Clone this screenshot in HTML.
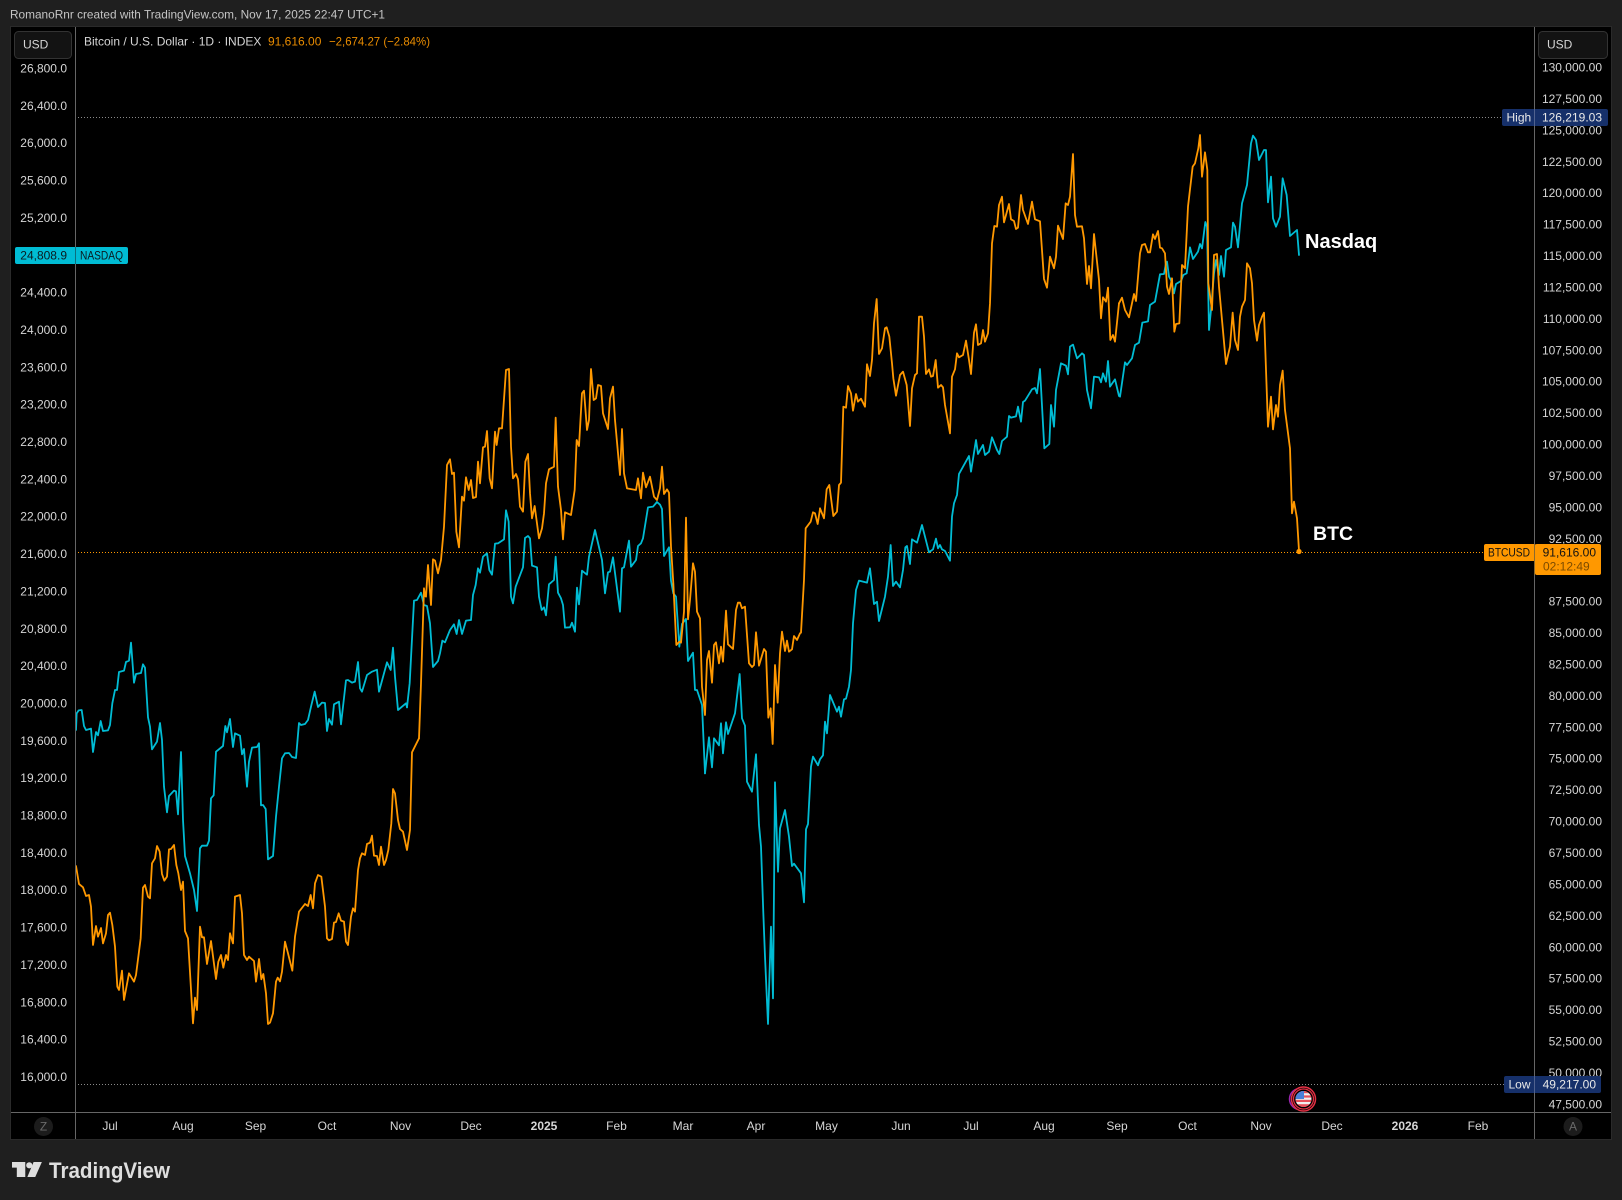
<!DOCTYPE html>
<html lang="en">
<head>
<meta charset="utf-8">
<title>Bitcoin / U.S. Dollar chart</title>
<style>
html,body{margin:0;padding:0;background:#1f1f1f;width:1622px;height:1200px;overflow:hidden}
svg{display:block}
text{font-family:"Liberation Sans",sans-serif;font-size:12px;fill:#d6d6d6}
.ly text{text-anchor:end}
.ry text{text-anchor:end}
.tm text{text-anchor:middle}
.c{fill:none;stroke:#00bcd4;stroke-width:5.4;stroke-linejoin:round;stroke-linecap:round}
.o{fill:none;stroke:#ff9800;stroke-width:5.4;stroke-linejoin:round;stroke-linecap:round}
</style>
</head>
<body>
<svg width="1622" height="1200" viewBox="0 0 1622 1200" xmlns="http://www.w3.org/2000/svg">
<text x="10" y="18.5" style="fill:#c4c4c4" textLength="375" lengthAdjust="spacingAndGlyphs">RomanoRnr created with TradingView.com, Nov 17, 2025 22:47 UTC+1</text>
<rect x="10.5" y="26.5" width="1601" height="1113" fill="#000" stroke="#2a2a2a"/>

<!-- dotted lines -->
<line x1="75" y1="117.5" x2="1502" y2="117.5" stroke="#8a8a8a" stroke-dasharray="1 2"/>
<line x1="75" y1="1084.5" x2="1504" y2="1084.5" stroke="#8a8a8a" stroke-dasharray="1 2"/>
<line x1="75" y1="552.5" x2="1484" y2="552.5" stroke="#ff9800" stroke-dasharray="1 2"/>

<!-- cyan -->
<g transform="translate(70,620) scale(.33333)"><polyline class="c" points="18,330 20,280 26,271 35,270 42,318 48,330 63,326 69,396 78,336 84,346 92,303 99,333 114,331 120,315 127,250 135,210 141,210 147,156 162,152 168,126 177,122 183,68 192,188 198,162 213,159 219,133 225,143 234,292 240,320 246,388 261,365 270,309 276,360 282,500 291,577 297,528 312,512 318,514 324,583 333,396 339,600 345,708 360,760 372,810 381,873 390,685 396,677 411,677 417,662 423,535 431,526 438,395 459,378 466,318 471,337 480,297 489,381 495,340 510,347 516,403 522,387 531,500 537,425 546,383 561,381 567,370 573,556 579,555 587,567 594,718 609,708 618,590 627,500 636,415 645,400 657,399 666,411 678,414 687,309 693,315 705,312 714,300 723,260 734,215 744,261 756,248 765,249 771,333 777,297 786,314 792,253 807,245 813,313 828,181 834,180 846,188 855,185 864,126 870,205 876,215 891,165 906,155 921,149 927,215 951,127 962,150 969,83 975,170 984,270 1008,250 1011,262"/></g>
<g transform="translate(400,350) scale(.33333)"><polyline class="c" points="21,1072 29,1000 42,752 51,750 63,728 72,765 81,768 90,820 99,951 114,933 120,910 127,872 135,877 150,840 162,823 170,852 177,810 186,852 198,812 213,810 219,735 227,705 234,655 240,668 249,620 261,610 268,660 276,674 285,581 294,580 312,568 318,481 326,515 333,740 339,760 347,710 369,652 375,564 384,558 390,565 396,647 411,652 417,740 425,780 432,772 438,796 447,703 462,690 467,620 474,728 483,745 489,765 495,833 510,832 516,818 525,845 531,713 537,763 546,662 561,674 567,620 585,540 606,630 615,730 624,667 630,665 639,622 660,785 666,655 672,652 687,572 693,650 708,630 714,588 723,580 729,565 744,472 759,470 771,456 780,464 786,477 792,618 807,592 813,692 820,730 828,740 838,890 846,822 858,807 864,933 879,908 885,1020 891,1020 906,1065 915,1270"/></g>
<g transform="translate(650,550) scale(.33333)"><polyline class="c" points="165,670 177,562 186,652 192,565 207,586 213,520 219,610 228,517 234,552 255,490 269,372 276,505 285,527 291,695 306,725 318,613 327,825 333,890 340,1090 345,1220 354,1422 363,1130 369,1345 375,697 384,965 390,835 405,780 417,860 426,948 432,941 453,970 462,1057 468,838 474,822 483,650 489,620 504,646 510,628 519,616 525,515 531,550 540,435 561,485 567,470 573,500 582,448 588,446 597,410 603,360 609,220 618,120 627,92 651,98 660,55 672,162 681,155 687,213 705,140 714,80 722,-15 729,108 738,95 750,112 759,60 766,-8 771,-12 780,42"/></g>
<g transform="translate(820,140) scale(.33333)"><polyline class="c" points="270,1270 276,1198 291,1208 306,1155 315,1190 327,1237 339,1228 348,1196 354,1225 360,1215 366,1228 375,1233 390,1262 396,1130 402,1090 411,1065 417,1002 447,948 453,995 468,900 474,942 489,915 495,945 507,935 516,892 531,930 538,942 546,903 561,890 567,828 573,833 588,829 594,800 603,845 609,786 615,782 636,748 645,744 651,760 660,687 673,925 688,912 693,795 702,860 708,750 723,670 738,677 744,703 750,620 759,614 771,655 786,640 792,645 801,750 813,805 822,710 837,712 843,727 849,700 858,725 864,663 870,740 885,718 897,768"/></g>
<g transform="translate(1080,120) scale(.33333)"><polyline class="c" points="120,830 135,727 141,735 156,715 165,675 177,668 187,608 204,604 210,555 225,545 240,463 252,462 258,430 261,425 267,470 273,480 282,520 288,492 303,483 310,465 320,460 330,382 339,417 354,395 360,372 366,385 376,306 381,320 387,630 393,570 402,460 408,420 417,465 423,408 432,470 438,390 453,382 459,308 465,320 474,382 486,250 501,195 513,70 519,47 528,60 537,120 552,90 558,90 564,247 573,170 579,295 588,320 600,290 608,175 620,225 630,348 651,330 657,405"/></g>

<!-- orange -->
<g transform="translate(70,620) scale(.33333)"><polyline class="o" points="18,738 27,792 39,802 48,828 57,825 63,860 69,975 78,918 84,950 93,924 99,970 108,940 114,885 120,878 127,915 135,980 142,1100 147,1110 156,1052 162,1140 177,1060 192,1085 198,1065 212,955 219,803 225,795 234,830 240,835 246,730 255,715 261,678 269,695 276,762 283,782 291,770 297,688 303,687 312,675 319,735 325,760 333,810 339,785 345,933 354,955 369,1210 375,1133 381,1170 390,920 396,952 402,952 411,1032 423,963 438,1077 445,1025 453,1005 460,1043 468,1005 474,1020 480,940 489,970 495,830 510,825 516,880 522,1005 531,1020 537,1010 552,1023 558,1085 567,1017 574,1078 580,1062 588,1120 594,1212 600,1208 609,1180 618,1085 623,1073 630,1084 636,1055 645,965 654,1000 667,1052 675,950 687,875 705,852 714,858 722,825 729,865 735,790 744,765 754,770 765,860 771,955 777,961 786,957 792,908 798,906 806,880 813,902 822,905 828,965 834,975 843,890 849,865 855,875 864,750 870,715 876,700 885,705 891,672 900,668 906,647 912,707 921,708 927,735 933,680 942,735 948,720 955,690 964,610 969,507 975,520 984,600 990,627 999,635 1011,690 1020,630 1026,397 1038,373 1047,355"/></g>
<g transform="translate(400,350) scale(.33333)"><polyline class="o" points="57,1165 63,1000 72,715 75,738 78,740 84,645 93,765 99,628 105,632 114,670 123,630 132,530 141,345 150,328 156,372 162,368 169,545 177,592 186,440 192,452 198,382 206,420 213,390 219,444 228,441 234,335 240,400 249,292 255,290 261,243 269,385 276,415 285,245 290,285 297,235 306,235 318,60 327,57 333,290 339,385 348,372 354,388 360,470 369,485 376,335 384,312 390,430 396,505 404,468 417,565 426,535 432,490 438,400 447,358 462,350 467,203 474,410 483,480 489,568 495,487 513,495 524,420 530,270 537,288 546,130 552,122 561,240 567,210 573,57 581,150 588,145 594,105 603,108 609,190 624,237 630,145 639,110 645,210 660,375 666,237 672,370 681,415 708,420 714,385 723,445 729,368 738,412 750,380 762,440 771,450 780,415 786,350 792,432 801,418 807,428 813,590 820,700 829,885 838,875 843,878 852,785 858,503 864,808 870,750 879,640 885,665 891,785 900,805 906,1010 915,1095 921,930 927,903 936,998 942,885 948,877 957,940 963,890 969,935 978,782 984,883 999,897 1008,780 1014,758 1020,758 1026,775 1035,770 1047,940 1056,951 1062,945 1068,847 1077,947 1092,897 1098,905 1105,1103 1112,1075 1118,1182 1125,945 1133,1058 1140,910 1146,845 1155,903 1161,872 1167,905 1176,898 1182,858 1191,870 1200,850"/></g>
<g transform="translate(790,480) scale(.33333)"><polyline class="o" points="33,458 42,300 47,145 62,125 69,97 75,100 83,132 90,87"/></g>
<g transform="translate(820,140) scale(.33333)"><polyline class="o" points="0,1105 12,1135 20,1048 28,1035 40,1128 51,1115 57,1035 63,1028 70,800 78,803 84,738 93,760 99,812 108,762 114,785 123,776 135,800 141,673 150,708 156,660 162,550 170,477 177,642 186,625 195,565 200,562 208,590 216,670 220,715 228,767 240,705 249,695 260,735 270,858 276,745 285,705 291,700 297,530 306,530 312,590 318,702 327,688 333,710 339,708 347,660 354,743 363,735 369,742 375,795 390,880 396,710 405,688 411,640 417,652 429,645 438,602 447,660 453,702 462,578 468,553 474,615 483,610 489,570 495,605 504,580 510,490 516,310 523,258 531,260 537,195 546,170 552,247 567,192 573,238 582,243 588,267 594,263 603,165 609,210 624,252 636,185 645,238 660,244 672,417 681,443 690,350 702,385 708,350 714,257 729,297 737,190 744,195 750,170 759,42 765,225 771,260 786,259 792,295 801,432 807,378 813,445 822,282 837,420 843,535 849,472 858,485 864,443 871,600 879,585 885,605 897,490"/></g>
<g transform="translate(1080,120) scale(.33333)"><polyline class="o" points="117,550 126,533 135,570 147,592 162,522 168,543 180,400 186,375 195,372 204,397 210,397 219,343 225,357 234,333 240,383 246,385 255,400 261,500 267,522 276,475 283,635 288,612 298,610 306,435 315,445 324,260 338,140 345,130 355,85 360,45 366,170 375,97 382,150 385,490 396,570 402,405 411,402 417,500 426,600 438,732 450,680 458,578 465,660 474,690 480,590 486,560 495,540 501,430 510,445 516,490 522,600 531,662 537,615 546,590 552,578 564,920 573,830 579,928 588,855 594,890 600,795 608,752 615,870 630,985 636,1180 642,1145 651,1195 657,1292"/></g>
<circle cx="1299" cy="551.5" r="2.6" fill="#ff9800"/>

<!-- annotations -->
<text x="1305" y="248" style="font-size:20px;font-weight:bold;fill:#fff">Nasdaq</text>
<text x="1313" y="540" style="font-size:19.5px;font-weight:bold;fill:#fff">BTC</text>

<!-- axes separators -->
<line x1="75.5" y1="27" x2="75.5" y2="1139" stroke="#666"/>
<line x1="1534.5" y1="27" x2="1534.5" y2="1139" stroke="#666"/>
<line x1="11" y1="1112.5" x2="1611" y2="1112.5" stroke="#666"/>

<!-- USD buttons -->
<rect x="14.5" y="31.5" width="57" height="27" rx="4" fill="#131313" stroke="#333"/>
<text x="23" y="48.5">USD</text>
<rect x="1538.5" y="31.5" width="69" height="27" rx="4" fill="#131313" stroke="#333"/>
<text x="1547" y="48.5">USD</text>

<!-- legend -->
<text x="84" y="45.5">Bitcoin / U.S. Dollar · 1D · INDEX</text>
<text x="268" y="45.5" style="fill:#e98c00">91,616.00</text>
<text x="329" y="45.5" style="fill:#e98c00" textLength="101" lengthAdjust="spacingAndGlyphs">−2,674.27 (−2.84%)</text>

<!-- left axis -->
<g class="ly">
<text x="67" y="72.5">26,800.0</text>
<text x="67" y="109.9">26,400.0</text>
<text x="67" y="147.2">26,000.0</text>
<text x="67" y="184.6">25,600.0</text>
<text x="67" y="221.9">25,200.0</text>
<text x="67" y="296.6">24,400.0</text>
<text x="67" y="333.9">24,000.0</text>
<text x="67" y="371.3">23,600.0</text>
<text x="67" y="408.6">23,200.0</text>
<text x="67" y="446">22,800.0</text>
<text x="67" y="483.4">22,400.0</text>
<text x="67" y="520.7">22,000.0</text>
<text x="67" y="558">21,600.0</text>
<text x="67" y="595.4">21,200.0</text>
<text x="67" y="632.8">20,800.0</text>
<text x="67" y="670.1">20,400.0</text>
<text x="67" y="707.5">20,000.0</text>
<text x="67" y="744.8">19,600.0</text>
<text x="67" y="782.2">19,200.0</text>
<text x="67" y="819.5">18,800.0</text>
<text x="67" y="856.9">18,400.0</text>
<text x="67" y="894.2">18,000.0</text>
<text x="67" y="931.6">17,600.0</text>
<text x="67" y="968.9">17,200.0</text>
<text x="67" y="1006.3">16,800.0</text>
<text x="67" y="1043.6">16,400.0</text>
<text x="67" y="1081">16,000.0</text>
</g>

<!-- right axis -->
<g class="ry">
<text x="1602" y="71.5">130,000.00</text>
<text x="1602" y="102.9">127,500.00</text>
<text x="1602" y="134.3">125,000.00</text>
<text x="1602" y="165.8">122,500.00</text>
<text x="1602" y="197.2">120,000.00</text>
<text x="1602" y="228.6">117,500.00</text>
<text x="1602" y="260">115,000.00</text>
<text x="1602" y="291.4">112,500.00</text>
<text x="1602" y="322.9">110,000.00</text>
<text x="1602" y="354.3">107,500.00</text>
<text x="1602" y="385.7">105,000.00</text>
<text x="1602" y="417.1">102,500.00</text>
<text x="1602" y="448.5">100,000.00</text>
<text x="1602" y="480">97,500.00</text>
<text x="1602" y="511.4">95,000.00</text>
<text x="1602" y="542.8">92,500.00</text>
<text x="1602" y="605.6">87,500.00</text>
<text x="1602" y="637.1">85,000.00</text>
<text x="1602" y="668.5">82,500.00</text>
<text x="1602" y="699.9">80,000.00</text>
<text x="1602" y="731.3">77,500.00</text>
<text x="1602" y="762.7">75,000.00</text>
<text x="1602" y="794.2">72,500.00</text>
<text x="1602" y="825.6">70,000.00</text>
<text x="1602" y="857">67,500.00</text>
<text x="1602" y="888.4">65,000.00</text>
<text x="1602" y="919.8">62,500.00</text>
<text x="1602" y="951.3">60,000.00</text>
<text x="1602" y="982.7">57,500.00</text>
<text x="1602" y="1014.1">55,000.00</text>
<text x="1602" y="1045.5">52,500.00</text>
<text x="1602" y="1076.9">50,000.00</text>
<text x="1602" y="1108.3">47,500.00</text>
</g>

<!-- High tag -->
<rect x="1502" y="109" width="106" height="17" rx="2" fill="#16306a"/>
<line x1="1534.5" y1="109" x2="1534.5" y2="126" stroke="#50628f"/>
<text x="1506.5" y="121.5" style="fill:#e8e8e8">High</text>
<text x="1602" y="121.5" style="text-anchor:end;fill:#e8e8e8">126,219.03</text>

<!-- Low tag -->
<rect x="1504" y="1076" width="97" height="17" rx="2" fill="#16306a"/>
<line x1="1534.5" y1="1076" x2="1534.5" y2="1093" stroke="#50628f"/>
<text x="1508.5" y="1088.5" style="fill:#e8e8e8">Low</text>
<text x="1596" y="1088.5" style="text-anchor:end;fill:#e8e8e8">49,217.00</text>

<!-- BTC tag -->
<rect x="1484" y="544" width="52" height="17" rx="2" fill="#ff9800"/>
<rect x="1535" y="544" width="66" height="31" rx="2" fill="#ff9800"/>
<line x1="1534.5" y1="544" x2="1534.5" y2="575" stroke="#8a6a30"/>
<text x="1488" y="556.5" style="fill:#131313" textLength="42" lengthAdjust="spacingAndGlyphs">BTCUSD</text>
<text x="1596" y="556.5" style="text-anchor:end;fill:#131313">91,616.00</text>
<text x="1543" y="570.5" style="fill:#7d4c00">02:12:49</text>

<!-- Nasdaq tag -->
<rect x="15" y="247" width="113" height="17" rx="2" fill="#00bcd4"/>
<line x1="75.5" y1="247" x2="75.5" y2="264" stroke="#0b6f7d"/>
<text x="67" y="259.5" style="text-anchor:end;fill:#0b1a20">24,808.9</text>
<text x="80" y="259.5" style="fill:#0b1a20" textLength="43" lengthAdjust="spacingAndGlyphs">NASDAQ</text>

<!-- time axis -->
<g class="tm">
<text x="110" y="1130">Jul</text>
<text x="183" y="1130">Aug</text>
<text x="255.5" y="1130">Sep</text>
<text x="327" y="1130">Oct</text>
<text x="400.5" y="1130">Nov</text>
<text x="471" y="1130">Dec</text>
<text x="544" y="1130" style="font-weight:bold">2025</text>
<text x="616.5" y="1130">Feb</text>
<text x="683" y="1130">Mar</text>
<text x="756" y="1130">Apr</text>
<text x="826.5" y="1130">May</text>
<text x="901" y="1130">Jun</text>
<text x="971" y="1130">Jul</text>
<text x="1044" y="1130">Aug</text>
<text x="1117" y="1130">Sep</text>
<text x="1187.5" y="1130">Oct</text>
<text x="1261" y="1130">Nov</text>
<text x="1332" y="1130">Dec</text>
<text x="1405" y="1130" style="font-weight:bold">2026</text>
<text x="1478" y="1130">Feb</text>
</g>

<!-- Z / A -->
<circle cx="43.5" cy="1126.5" r="9.5" fill="#1c1c1c"/>
<text x="43.5" y="1130.5" style="text-anchor:middle;fill:#6a6a6a">Z</text>
<circle cx="1573" cy="1126.5" r="9.5" fill="#1c1c1c"/>
<text x="1573" y="1130.5" style="text-anchor:middle;fill:#6a6a6a">A</text>

<!-- event icon -->
<circle cx="1300" cy="1099" r="10.5" fill="#000" stroke="#9c27b0" stroke-width="1.5"/>
<circle cx="1303.5" cy="1099" r="12" fill="#000" stroke="#e53044" stroke-width="1.5"/>
<circle cx="1303.5" cy="1099" r="10" fill="#000" stroke="#e53044" stroke-width="1.2"/>
<clipPath id="fl"><circle cx="1303.5" cy="1099" r="8"/></clipPath>
<g clip-path="url(#fl)">
<rect x="1295" y="1091" width="17" height="16" fill="#f0f0f0"/>
<rect x="1295" y="1091" width="17" height="2.2" fill="#e8505b"/>
<rect x="1295" y="1095.4" width="17" height="2.2" fill="#e8505b"/>
<rect x="1295" y="1099.8" width="17" height="2.2" fill="#e8505b"/>
<rect x="1295" y="1104.2" width="17" height="2.8" fill="#e8505b"/>
<rect x="1295" y="1091" width="9" height="8" fill="#4a80d8"/>
</g>

<!-- TradingView logo -->
<g transform="translate(12,1158.7) scale(.83)"><path fill="#dedede" d="M16 22H5.8V10.8H0V4h16zM28 22h-9.5L26 4h10z"/><circle cx="20.8" cy="8" r="3.7" fill="#dedede"/></g>
<text x="49" y="1178" style="font-size:22px;font-weight:bold;fill:#dedede" textLength="121" lengthAdjust="spacingAndGlyphs">TradingView</text>
</svg>
</body>
</html>
